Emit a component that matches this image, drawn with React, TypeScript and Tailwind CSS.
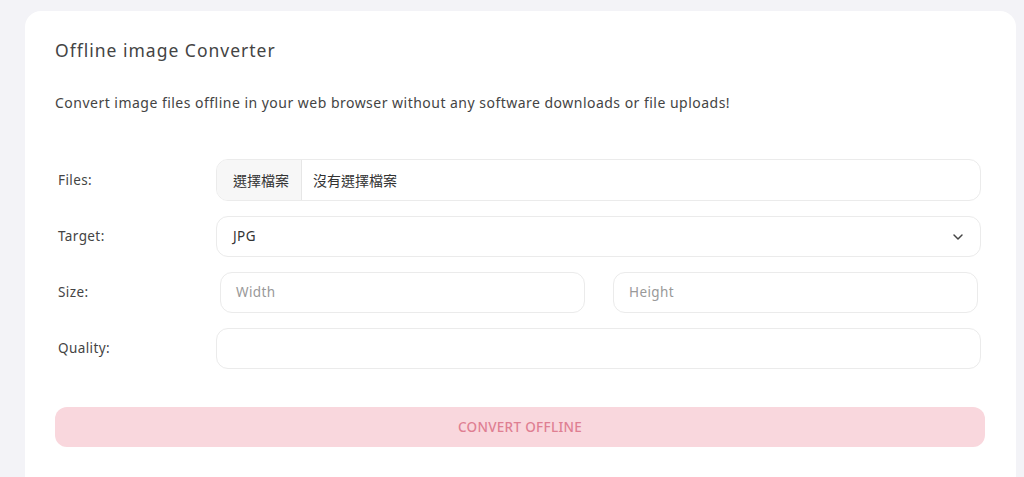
import { ChevronDown } from "lucide-react";

const font = { fontFamily: '"Noto Sans", "Noto Sans CJK TC", sans-serif' };

function Row({ label, children }: { label: string; children: React.ReactNode }) {
  return (
    <div className="flex items-center pr-[5px]">
      <label className="w-[161px] shrink-0 pl-[3px] text-[13.5px] tracking-[0.4px] text-[#444]">{label}</label>
      <div className="flex-1">{children}</div>
    </div>
  );
}

export default function App() {
  return (
    <div className="min-h-[477px] bg-[#f3f3f7] pl-[25px] pr-[8px] pt-[11px]" style={font}>
      <div className="h-[470px] rounded-t-2xl bg-white px-[30px] pt-[27px]">
        <h1 className="text-[17.5px] leading-6 tracking-[1px] text-[#444]">Offline image Converter</h1>
        <p className="mt-[31px] text-[14px] leading-5 tracking-[0.48px] text-[#444]">
          Convert image files offline in your web browser without any software downloads or file uploads!
        </p>

        <div className="mt-[46px] flex flex-col gap-[15px]">
          <Row label="Files:">
            <div className="flex h-[42px] items-center overflow-hidden rounded-xl border border-[#ebebeb] text-[14px] text-[#333]">
              <span className="flex h-full items-center border-r border-[#e6e6e6] bg-[#f7f7f7] pl-4 pr-3">選擇檔案</span>
              <span className="pl-[11px]">沒有選擇檔案</span>
            </div>
          </Row>
          <Row label="Target:">
            <div className="flex h-[41px] items-center justify-between rounded-xl border border-[#ebebeb] pl-4 pr-[14px] text-[13.5px] tracking-[0.4px] text-[#333]">
              <span>JPG</span>
              <ChevronDown className="h-4 w-4 text-[#444]" strokeWidth={2.2} />
            </div>
          </Row>
          <Row label="Size:">
            <div className="grid grid-cols-2 gap-[28px] pl-1 pr-[3px]">
              <div className="flex h-[41px] items-center rounded-xl border border-[#ebebeb] px-[15px] text-[13.5px] tracking-[0.4px] text-[#999]">Width</div>
              <div className="flex h-[41px] items-center rounded-xl border border-[#ebebeb] px-[15px] text-[13.5px] tracking-[0.4px] text-[#999]">Height</div>
            </div>
          </Row>
          <Row label="Quality:">
            <div className="h-[41px] rounded-xl border border-[#ebebeb]" />
          </Row>
        </div>

        <button
          type="button"
          className="mt-[38px] flex h-[40px] w-[930px] items-center justify-center rounded-xl bg-[#f9d7dd] text-[13.5px] font-medium tracking-[0.3px] text-[#df7f92]"
        >
          CONVERT OFFLINE
        </button>
      </div>
    </div>
  );
}
